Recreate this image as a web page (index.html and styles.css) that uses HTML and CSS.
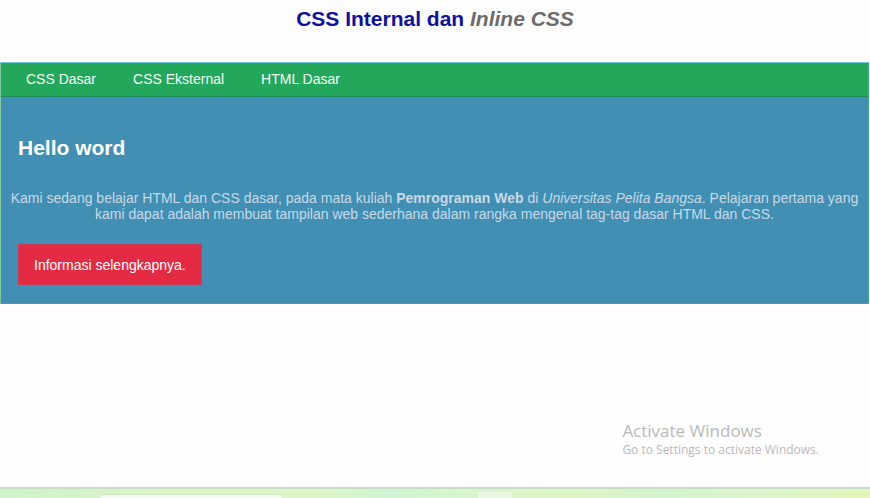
FILE: index.html
```html
<!DOCTYPE html>
<html lang="id">
<head>
<meta charset="utf-8">
<title>CSS Internal dan Inline CSS</title>
<link rel="stylesheet" href="styles.css">
</head>
<body>
<header class="heading">
  <h1>CSS Internal dan <i>Inline CSS</i></h1>
</header>
<div class="panel">
  <nav class="menu">
    <a href="#dasar">CSS Dasar</a>
    <a href="#eksternal">CSS Eksternal</a>
    <a href="#html">HTML Dasar</a>
  </nav>
  <main class="intro">
    <h2>Hello word</h2>
    <p>Kami sedang belajar HTML dan CSS dasar, pada mata kuliah <b>Pemrograman Web</b> di <i>Universitas Pelita Bangsa</i>. Pelajaran pertama yang kami dapat adalah membuat tampilan web sederhana dalam rangka mengenal tag-tag dasar HTML dan CSS.</p>
    <a class="button" href="#info">Informasi selengkapnya.</a>
  </main>
</div>
<aside class="watermark">
  <p class="watermark-title">Activate Windows</p>
  <p>Go to Settings to activate Windows.</p>
</aside>
<footer class="taskbar">
  <div class="search"></div>
  <div class="task"></div>
</footer>
</body>
</html>
```
FILE: styles.css
```css
* {
  box-sizing: border-box;
}

body {
  display: flex;
  flex-direction: column;
  height: 100vh;
  margin: 0;
  overflow: hidden;
  background: #fefefe;
  font: 14px/16px "Liberation Sans", Arial, sans-serif;
}

h1, h2, p {
  margin: 0;
}

.heading {
  padding: 8px 0 32px;
  text-align: center;
}

h1 {
  color: #10109c;
  font-size: 21px;
  line-height: 22px;
}

h1 i {
  color: #6c6c6c;
}

.panel {
  margin-right: 1px;
  border: 1px solid #42ac80;
  border-top-color: #74c8dc;
  border-left-color: #82c9a0;
  background: #418fb2;
}

.menu {
  display: flex;
  gap: 37px;
  padding: 8px 25px 9px;
  border-bottom: 1px solid #208b60;
  background: #22a75b;
}

.menu a {
  color: #f4fff6;
  text-decoration: none;
}

.intro {
  padding: 40px 17px 18px;
}

h2 {
  margin-bottom: 31px;
  color: #fff;
  font-size: 21px;
  line-height: 22px;
}

.intro p {
  margin: 0 -10px 22px;
  color: #c8d9e8;
  text-align: center;
}

.button {
  display: inline-block;
  padding: 12px 15px 11px;
  border: 1px solid #c83c5a;
  background: #e42b43;
  color: #fff;
  text-decoration: none;
  vertical-align: top;
}

.watermark {
  position: absolute;
  right: 51px;
  bottom: 39px;
  color: #bababa;
  font: 12px/18px "Open Sans", sans-serif;
}

.watermark-title {
  font-size: 17px;
  line-height: 21px;
}

.taskbar {
  display: flex;
  align-items: flex-end;
  height: 11px;
  margin-top: auto;
  padding-left: 100px;
  border-top: 2px solid #c9dcc7;
  background: linear-gradient(90deg, #d0f2cc, #dcf5c4 20%, #dcf5c4 36%, #d2f4d5 45%, #def5c3 65%, #d5f3d0 76%, #dcf5cc 88%, #e4f5b8);
}

.search {
  width: 182px;
  height: 4px;
  border-top: 1px solid #cde5c6;
  border-radius: 8px 8px 0 0;
  background: #f4fcef;
}

.task {
  width: 34px;
  height: 7px;
  margin-left: 196px;
  border-top: 1px solid #dcf0d8;
  border-radius: 3px 3px 0 0;
  background: #e9f9e4;
}
```
